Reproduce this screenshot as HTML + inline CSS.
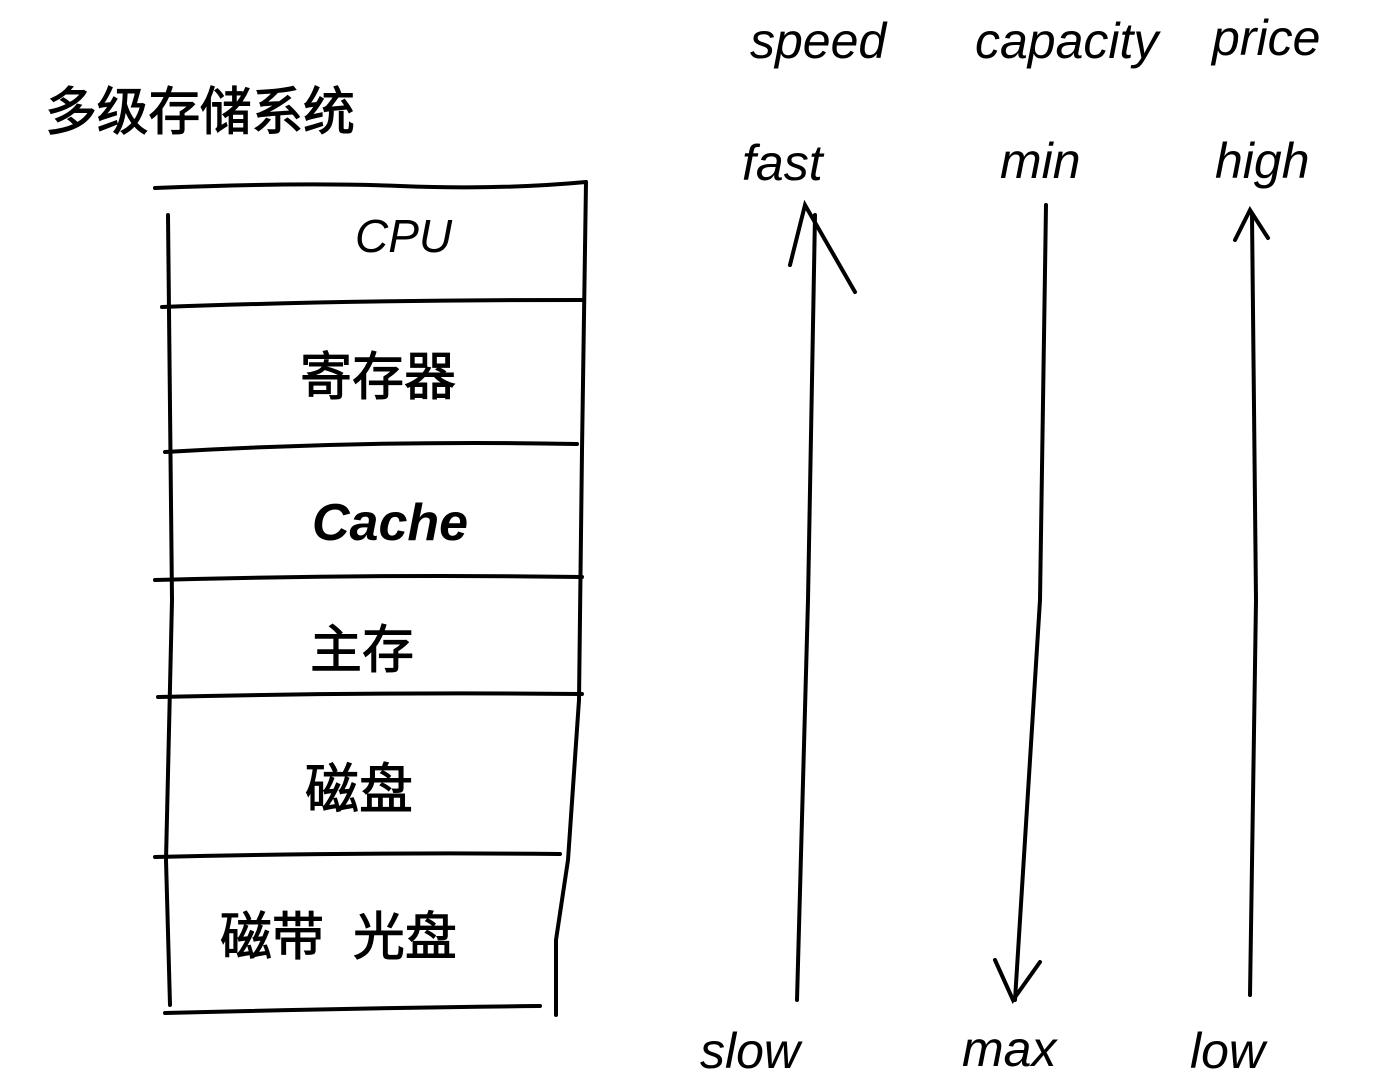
<!DOCTYPE html>
<html><head><meta charset="utf-8">
<style>
html,body{margin:0;padding:0;background:#fff;}
svg{display:block;}
text{font-family:"Liberation Sans","Noto Sans CJK SC",sans-serif;fill:#000;}
</style></head>
<body>
<svg width="1392" height="1092" viewBox="0 0 1392 1092" xmlns="http://www.w3.org/2000/svg">
<g stroke="#000" stroke-width="4" fill="none" stroke-linecap="round">
<path d="M168 215 L172 600 L166 860 L170 1005"/>
<path d="M586 182 L582 450 L579 700 L568 860 L556 940 L556 1015"/>
<path d="M155 188 Q300 182 400 186 T586 182"/>
<path d="M162 307 Q350 300 582 300"/>
<path d="M165 452 Q370 440 577 444"/>
<path d="M155 580 Q370 574 582 577"/>
<path d="M158 697 Q370 692 582 694"/>
<path d="M155 857 Q370 852 560 854"/>
<path d="M165 1013 Q360 1008 540 1006"/>
<path d="M797 1000 L808 600 L815 215"/>
<path d="M790 265 L805 205 L855 292"/>
<path d="M1046 205 L1040 600 L1015 1000"/>
<path d="M995 960 L1013 1000 L1040 962"/>
<path d="M1250 995 L1256 600 L1252 215"/>
<path d="M1235 240 L1250 210 L1268 238"/>
</g>
<g font-style="italic">
<text x="45" y="130" font-size="52" font-style="normal" textLength="310" stroke="#000" stroke-width="1">多级存储系统</text>
<text x="355" y="252" font-size="46">CPU</text>
<text x="300" y="395" font-size="52" font-style="normal" stroke="#000" stroke-width="1">寄存器</text>
<text x="312" y="540" font-size="52" font-weight="bold">Cache</text>
<text x="310" y="668" font-size="52" font-style="normal" stroke="#000" stroke-width="1">主存</text>
<text x="305" y="808" font-size="54" font-style="normal" stroke="#000" stroke-width="1">磁盘</text>
<text x="220" y="955" font-size="52" font-style="normal" stroke="#000" stroke-width="1">磁带&#160;&#160;光盘</text>
<text x="750" y="58" font-size="50">speed</text>
<text x="975" y="58" font-size="50">capacity</text>
<text x="1212" y="55" font-size="50">price</text>
<text x="742" y="180" font-size="50">fast</text>
<text x="1000" y="178" font-size="50">min</text>
<text x="1215" y="178" font-size="50">high</text>
<text x="700" y="1068" font-size="50">slow</text>
<text x="962" y="1066" font-size="50">max</text>
<text x="1190" y="1068" font-size="50">low</text>
</g>
</svg>
</body></html>
